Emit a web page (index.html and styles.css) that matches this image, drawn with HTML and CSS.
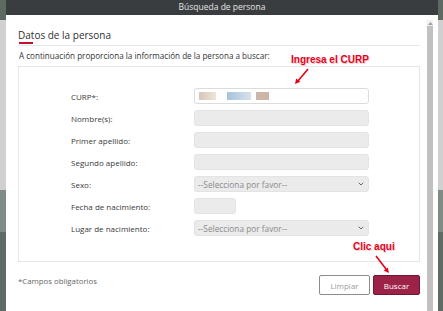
FILE: index.html
```html
<!DOCTYPE html>
<html lang="es">
<head>
    <meta charset="UTF-8">
    <meta name="viewport" content="width=device-width, initial-scale=1.0">
    <title>Búsqueda de persona</title>
    <link rel="stylesheet" href="styles.css">
</head>
<body>
    <div class="page">
        <div class="modal">
            <div class="modal-header">Búsqueda de persona</div>
            <div class="modal-body">
                <div class="content">
                    <h2 class="section-title">Datos de la persona</h2>
                    <div class="title-mark"></div>
                    <div class="divider"></div>
                    <p class="intro">A continuación proporciona la información de la persona a buscar:</p>

                    <div class="panel">
                        <div class="row">
                            <label>CURP*:</label>
                            <div class="field field-curp">
                                <span class="blur b1"></span>
                                <span class="blur b2"></span>
                                <span class="blur b3"></span>
                            </div>
                        </div>
                        <div class="row">
                            <label>Nombre(s):</label>
                            <div class="field"></div>
                        </div>
                        <div class="row">
                            <label>Primer apellido:</label>
                            <div class="field"></div>
                        </div>
                        <div class="row">
                            <label>Segundo apellido:</label>
                            <div class="field"></div>
                        </div>
                        <div class="row">
                            <label>Sexo:</label>
                            <div class="field field-select">
                                <span>--Selecciona por favor--</span>
                                <svg width="6" height="4" viewBox="0 0 6 4"><path d="M0.8 0.8 L3 3 L5.2 0.8" fill="none" stroke="#666" stroke-width="1"/></svg>
                            </div>
                        </div>
                        <div class="row">
                            <label>Fecha de nacimiento:</label>
                            <div class="field field-date"></div>
                        </div>
                        <div class="row">
                            <label>Lugar de nacimiento:</label>
                            <div class="field field-select">
                                <span>--Selecciona por favor--</span>
                                <svg width="6" height="4" viewBox="0 0 6 4"><path d="M0.8 0.8 L3 3 L5.2 0.8" fill="none" stroke="#666" stroke-width="1"/></svg>
                            </div>
                        </div>
                    </div>

                    <div class="footer">
                        <span class="note">*Campos obligatorios</span>
                        <div class="actions">
                            <button class="btn btn-light">Limpiar</button>
                            <button class="btn btn-primary">Buscar</button>
                        </div>
                    </div>
                </div>
                <div class="scrollbar">
                    <div class="scroll-up">
                        <svg width="5" height="3" viewBox="0 0 5 3"><path d="M0 3 L2.5 0 L5 3 Z" fill="#a0a0a0"/></svg>
                    </div>
                    <div class="scroll-thumb"></div>
                </div>
            </div>
        </div>

        <div class="callout callout-curp">Ingresa el CURP</div>
        <svg class="arrow arrow-curp" width="20" height="20" viewBox="0 0 20 20">
            <path d="M16 2 L6 14" stroke="#e3001b" stroke-width="1.6" fill="none"/>
            <path d="M3 17 L4.2 11.6 L8.4 14.8 Z" fill="#e3001b"/>
        </svg>

        <div class="callout callout-buscar">Clic aqui</div>
        <svg class="arrow arrow-buscar" width="20" height="22" viewBox="0 0 20 22">
            <path d="M3 2 L13 15" stroke="#e3001b" stroke-width="1.6" fill="none"/>
            <path d="M16 19 L10.6 16.6 L14.8 13.4 Z" fill="#e3001b"/>
        </svg>
    </div>
</body>
</html>
```

FILE: styles.css
```css
body {
    margin: 0;
    width: 443px;
    height: 311px;
    overflow: hidden;
    font-family: 'Open Sans', 'Liberation Sans', sans-serif;
    color: #333;
    background: linear-gradient(to bottom,
        #5c6a62 0, #5c6a62 20px,
        #cfd0cf 20px, #cfd0cf 190px,
        #7f8b84 190px, #7f8b84 232px,
        #5f6b64 232px);
}
.page {
    position: relative;
    height: 311px;
    display: flex;
    padding: 0 5px 0 6px;
}
.modal {
    flex: 1;
    display: flex;
    flex-direction: column;
    background-color: white;
}
.modal-header {
    height: 15px;
    line-height: 14px;
    background-color: #3a3d40;
    color: #e4e4e4;
    font-size: 8.5px;
    text-align: center;
}
.modal-body {
    flex: 1;
    display: flex;
    padding: 0 5px 0 12px;
}
.content {
    width: 402px;
    margin-right: 7px;
}
.section-title {
    margin: 0;
    padding-top: 14px;
    font-size: 10px;
    line-height: 12px;
    font-weight: 500;
    color: #2f2f2f;
}
.title-mark {
    width: 14px;
    height: 2px;
    margin: 1px 0 0 1px;
    background-color: #c8102e;
}
.divider {
    margin-top: 1px;
    border-top: 1px solid #e8e8e8;
}
.intro {
    margin: 5px 0 5px 1px;
    font-size: 8.1px;
    line-height: 10px;
    font-weight: 500;
    color: #333;
}
.panel {
    border: 1px solid #e6e6e6;
    padding: 21px 0 25px 52px;
    display: flex;
    flex-direction: column;
    gap: 6px;
}
.row {
    display: flex;
    align-items: center;
    height: 16px;
}
.row label {
    width: 123px;
    font-size: 8px;
    font-weight: 500;
    color: #3a3a3a;
}
.field {
    width: 175px;
    height: 16px;
    box-sizing: border-box;
    background-color: #ebebeb;
    border: 1px solid #e3e3e3;
    border-radius: 3px;
}
.field-curp {
    background-color: white;
    border-color: #dcdcdc;
    display: flex;
    align-items: center;
    padding-left: 4px;
}
.blur {
    height: 8px;
    display: block;
}
.b1 {
    width: 17px;
    background: linear-gradient(to right, #d9c6bb, #efe5d8);
}
.b2 {
    width: 24px;
    margin-left: 11px;
    background: linear-gradient(to right, #a7c2db, #d6e2ee);
}
.b3 {
    width: 13px;
    margin-left: 5px;
    background-color: #ccb6aa;
}
.field-select {
    display: flex;
    align-items: center;
    justify-content: space-between;
    padding: 0 4px 0 3px;
    font-size: 8.3px;
    color: #8a8a8a;
}
.field-date {
    width: 42px;
}
.footer {
    display: flex;
    justify-content: space-between;
    align-items: flex-start;
    margin-top: 13px;
}
.note {
    margin-top: 1px;
    font-size: 7.8px;
    color: #666;
}
.actions {
    display: flex;
    gap: 3px;
}
.btn {
    height: 20px;
    padding: 0;
    font-family: 'Open Sans', 'Liberation Sans', sans-serif;
    font-size: 8px;
    border-radius: 2px;
    cursor: pointer;
}
.btn-light {
    width: 51px;
    background-color: white;
    border: 1px solid #8c8c8c;
    color: #9a9a9a;
}
.btn-primary {
    width: 47px;
    background-color: #9c2248;
    border: 1px solid #6e1632;
    color: white;
}
.scrollbar {
    width: 6px;
    margin-top: 5px;
    display: flex;
    flex-direction: column;
}
.scroll-up {
    height: 6px;
    display: flex;
    align-items: center;
    justify-content: center;
    background-color: #f1f1f1;
}
.scroll-thumb {
    flex: 1;
    background-color: #c1c1c1;
}
.callout {
    position: absolute;
    font-family: 'Liberation Sans', Arial, sans-serif;
    font-weight: bold;
    font-size: 10px;
    line-height: 12px;
    color: #e3001b;
    text-shadow: 0 0 1px #fff, 1px 1px 0 #f6c5c5;
}
.callout-curp {
    left: 291px;
    top: 54px;
}
.callout-buscar {
    left: 353px;
    top: 241px;
}
.arrow {
    position: absolute;
}
.arrow-curp {
    left: 292px;
    top: 67px;
}
.arrow-buscar {
    left: 373px;
    top: 254px;
}
```
